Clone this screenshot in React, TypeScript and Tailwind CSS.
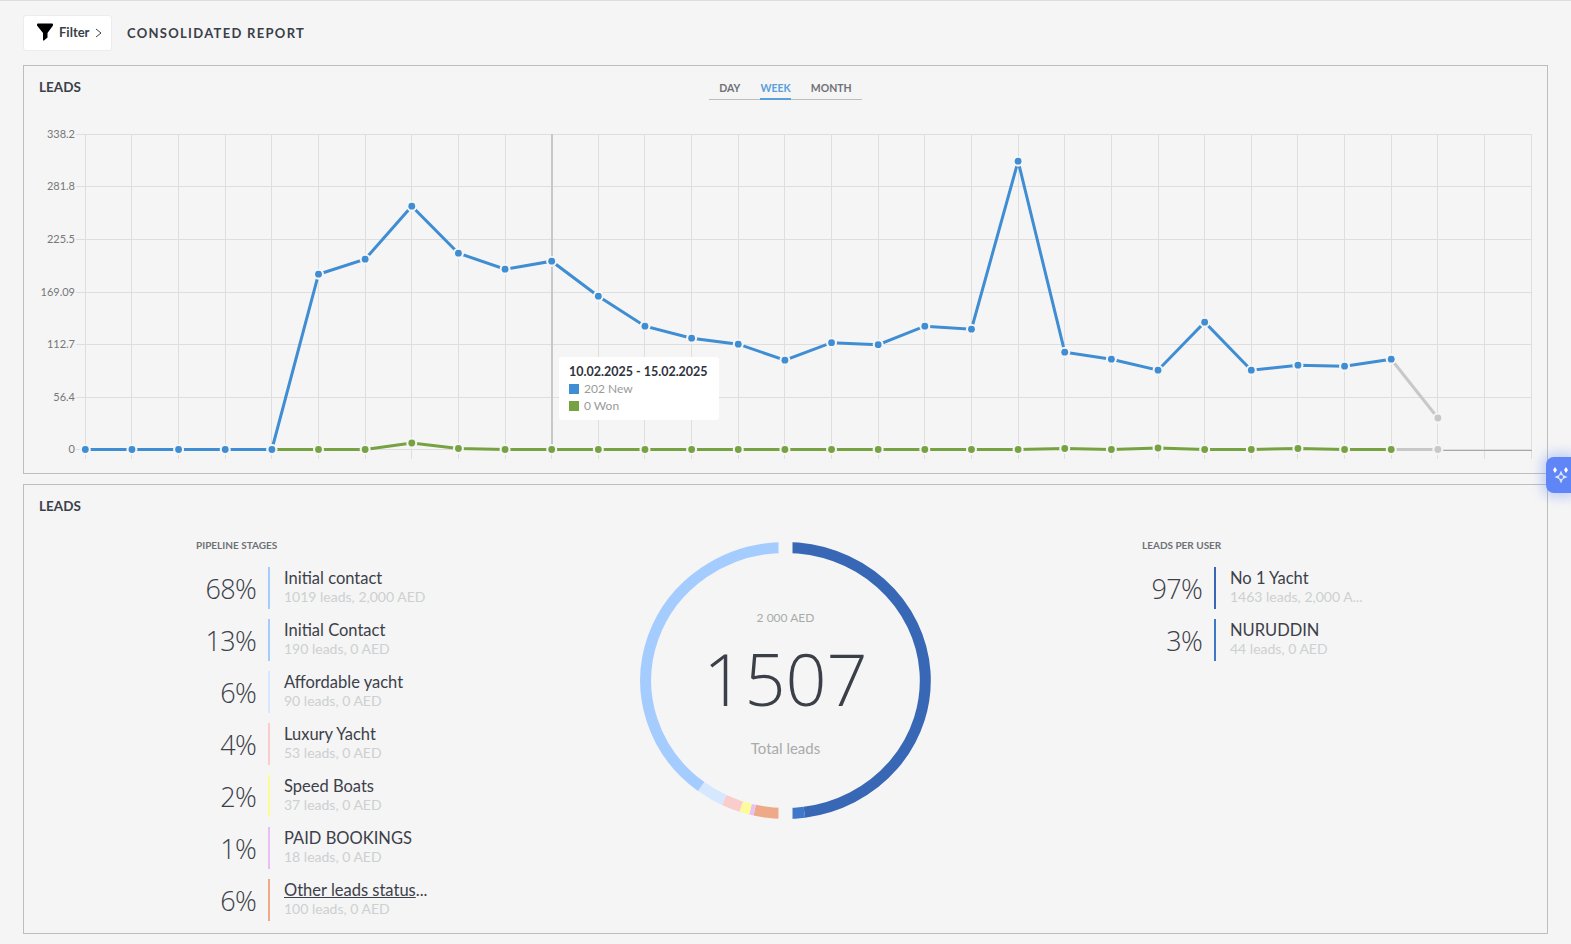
import { Fragment } from "react";

const xAt = (i: number) => 85.3 + 46.64 * i;
const gridX = (i: number) => Math.floor(xAt(i)) + 0.5;
const gridYs = [134.5, 186.5, 239.5, 292.5, 344.5, 397.5, 449.5];
const yLabels = ["338.2", "281.8", "225.5", "169.09", "112.7", "56.4", "0"];

const blueYs = [
  449.5, 449.5, 449.5, 449.5, 449.5, 274.2, 259.2, 206.2, 253.2, 269.2, 261.2,
  296.2, 326.2, 338.2, 344.2, 360.2, 342.7, 344.7, 326.2, 329.2, 161.2, 352.2, 359.2,
  370.2, 322.2, 370.2, 365.2, 366.2, 359.2,
];
// green series starts where the blue one leaves the axis
const greenYs = [
  449.5, 449.5, 449.5, 443, 448.5, 449.5, 449.5, 449.5, 449.5, 449.5, 449.5,
  449.5, 449.5, 449.5, 449.5, 449.5, 449.5, 448.5, 449.5, 448, 449.5, 449.5,
  448.5, 449.5, 449.5,
];
const greenStart = 4;
const lastIdx = 28;
const greyBlueY = 418;

const stages = [
  { pct: "68%", name: "Initial contact", sub: "1019 leads, 2,000 AED", color: "bg-[#a4ccff]" },
  { pct: "13%", name: "Initial Contact", sub: "190 leads, 0 AED", color: "bg-[#a4ccff]" },
  { pct: "6%", name: "Affordable yacht", sub: "90 leads, 0 AED", color: "bg-[#d6e8ff]" },
  { pct: "4%", name: "Luxury Yacht", sub: "53 leads, 0 AED", color: "bg-[#fbcccc]" },
  { pct: "2%", name: "Speed Boats", sub: "37 leads, 0 AED", color: "bg-[#fbfb99]" },
  { pct: "1%", name: "PAID BOOKINGS", sub: "18 leads, 0 AED", color: "bg-[#e8c0f5]" },
  { pct: "6%", name: "Other leads status...", sub: "100 leads, 0 AED", color: "bg-[#eeaa88]", link: true },
];

const users = [
  { pct: "97%", name: "No 1 Yacht", sub: "1463 leads, 2,000 A...", color: "bg-[#3867b5]" },
  { pct: "3%", name: "NURUDDIN", sub: "44 leads, 0 AED", color: "bg-[#3f78c9]" },
];

// angles clockwise from the top of the ring
const ringParts = [
  { from: 0, to: 172.25, color: "#3867b5" },
  { from: 172.25, to: 180, color: "#3f78c9" },
  { from: 180, to: 192.7, color: "#eeaa88" },
  { from: 192.7, to: 194.5, color: "#e8c0f5" },
  { from: 194.5, to: 198.5, color: "#fbfb99" },
  { from: 198.5, to: 206, color: "#fbcccc" },
  { from: 206, to: 217.1, color: "#d6e8ff" },
  { from: 217.1, to: 360, color: "#a4ccff" },
];

const arcPath = (from: number, to: number) => {
  const rx = 139.8;
  const ry = 133;
  const pt = (a: number) => {
    const r = (a * Math.PI) / 180;
    return `${145.5 + rx * Math.sin(r)} ${138.5 - ry * Math.cos(r)}`;
  };
  return `M${pt(from)} A${rx} ${ry} 0 ${to - from > 180 ? 1 : 0} 1 ${pt(to - 0.001)}`;
};

const StatRow = ({ row }: { row: { pct: string; name: string; sub: string; color: string; link?: boolean } }) => (
  <div className="flex h-[42px] items-stretch">
    <div className="flex w-[60px] items-center justify-end pt-[2px] font-['Open_Sans',sans-serif] text-[27px] font-light tracking-[-0.7px] text-[#3c4049]">
      {row.pct}
    </div>
    <div className={`ml-3 w-[2px] ${row.color}`} />
    <div className="ml-[14px] flex w-[150px] flex-col">
      <div className="h-[22px] text-[16.5px] leading-[22px] text-[#3c4049]">
        {row.link ? (
          <>
            <span className="underline">Other leads status</span>...
          </>
        ) : (
          row.name
        )}
      </div>
      <div className="text-[14px] leading-[16px] text-[#cdd0d0]">{row.sub}</div>
    </div>
  </div>
);

const Chart = () => (
  <svg viewBox="24 120 1523 353" width={1523} height={353} className="block">
    {gridYs.map((y) => (
      <line key={y} x1={76} x2={1532} y1={y} y2={y} stroke="#dedede" strokeWidth={1} />
    ))}
    {Array.from({ length: 32 }, (_, i) => (
      <line key={i} x1={gridX(i)} x2={gridX(i)} y1={134} y2={459} stroke="#dedede" strokeWidth={1} />
    ))}
    <line x1={xAt(29)} x2={1532} y1={450.5} y2={450.5} stroke="#a8a8a8" strokeWidth={1} />
    <line x1={552} x2={552} y1={134} y2={449} stroke="#c8c8c8" strokeWidth={2} />
    {gridYs.map((y, i) => (
      <text key={y} x={75} y={y + 3} textAnchor="end" fontSize={11} fill="#777">
        {yLabels[i]}
      </text>
    ))}

    {/* green series */}
    <polyline
      points={greenYs.map((y, i) => `${xAt(i + greenStart)},${y}`).join(" ")}
      fill="none"
      stroke="#76a241"
      strokeWidth={3}
    />
    {/* grey forecast part */}
    <line x1={xAt(lastIdx)} y1={449.5} x2={xAt(29)} y2={449.5} stroke="#c8c8c8" strokeWidth={3} />
    <line x1={xAt(lastIdx)} y1={blueYs[lastIdx]} x2={xAt(29)} y2={greyBlueY} stroke="#c8c8c8" strokeWidth={3} />
    <polyline
      points={blueYs.map((y, i) => `${xAt(i)},${y}`).join(" ")}
      fill="none"
      stroke="#3f8dd2"
      strokeWidth={3}
    />

    {greenYs.map((y, i) => (
      <Fragment key={i}>
        <circle cx={xAt(i + greenStart)} cy={y} r={5.5} fill="#f5f5f5" />
        <circle cx={xAt(i + greenStart)} cy={y} r={3.4} fill="#76a241" />
      </Fragment>
    ))}
    {blueYs.map((y, i) => (
      <Fragment key={i}>
        <circle cx={xAt(i)} cy={y} r={5.5} fill="#f5f5f5" />
        <circle cx={xAt(i)} cy={y} r={3.4} fill="#3f8dd2" />
      </Fragment>
    ))}
    {[449.5, greyBlueY].map((y) => (
      <Fragment key={y}>
        <circle cx={xAt(29)} cy={y} r={5.5} fill="#f5f5f5" />
        <circle cx={xAt(29)} cy={y} r={3.4} fill="#c8c8c8" />
      </Fragment>
    ))}
  </svg>
);

const Donut = () => (
  <div className="relative mt-[9px] h-[277px] w-[291px]">
    <svg viewBox="0 0 291 277" width={291} height={277} className="block">
      {ringParts.map((p) => (
        <path key={p.from} d={arcPath(p.from, p.to)} fill="none" stroke={p.color} strokeWidth={11} />
      ))}
      <rect x={138.5} y={0} width={14} height={14} fill="#f5f5f5" />
      <rect x={138.5} y={263} width={14} height={14} fill="#f5f5f5" />
    </svg>
    <div className="absolute inset-0 flex flex-col items-center">
      <div className="mt-[67px] h-[18px] text-[12px] leading-[18px] text-[#a9abab]">2 000 AED</div>
      <div className="mt-[2px] h-[98px] font-['Open_Sans',sans-serif] text-[72px] leading-[98px] font-light text-[#3a3f48]">
        1507
      </div>
      <div className="mt-[11px] text-[15px] leading-[20px] text-[#a9abab]">Total leads</div>
    </div>
  </div>
);

export default function App() {
  return (
    <div className="relative h-[944px] w-[1571px] overflow-hidden border-t border-[#dedede] bg-[#f5f5f5] font-['Lato',sans-serif]">
      <div className="flex h-[64px] items-center pl-[23px]">
        <button className="flex h-[36px] w-[89px] items-center rounded-[3px] border border-[#ececec] bg-white pl-3 text-[13px] font-bold text-[#3a3f48]">
          <svg width={18} height={18} viewBox="0 0 18 18" className="mr-[5px] mb-[3px]">
            <path d="M1 1.5 Q1 .5 2 .5 H16 Q17 .5 17 1.5 V2.5 L11.5 10 V14.5 L8 17.5 H7 V10 L1 2.5 Z" fill="#000" />
          </svg>
          Filter
          <svg width={7} height={10} viewBox="0 0 7 10" className="ml-[6px]">
            <path d="M1 1 L6 5 L1 9" fill="none" stroke="#444" strokeWidth={1} />
          </svg>
        </button>
        <h1 className="mt-[1px] ml-[15px] text-[13px] font-bold tracking-[1.3px] text-[#3a3f48]">CONSOLIDATED REPORT</h1>
      </div>

      <div className="ml-[23px] h-[409px] w-[1525px] border border-[#bdbdbd]">
        <div className="grid h-[54px] grid-cols-[1fr_auto_1fr] items-start">
          <div className="pt-[12px] pl-[15px] text-[13.5px] leading-[18px] font-bold text-[#3a3f48]">LEADS</div>
          <div className="mt-[13px] flex h-[21px] gap-5 border-b border-[#bdbdbd] px-[10px] text-[10.5px] leading-[19px] font-bold text-[#6f7175]">
            <span>DAY</span>
            <span className="h-[21px] border-b-2 border-[#5aa0dc] text-[#5aa0dc]">WEEK</span>
            <span>MONTH</span>
          </div>
          <div />
        </div>
        <Chart />
      </div>

      <div className="mt-[10px] ml-[23px] h-[450px] w-[1525px] border border-[#bdbdbd]">
        <div className="pt-[12px] pl-[15px] text-[13.5px] leading-[18px] font-bold text-[#3a3f48]">LEADS</div>
        <div className="mt-[18px] flex">
          <div className="ml-[172px] w-[444px]">
            <div className="text-[10px] leading-[24px] font-bold text-[#6f7175]">PIPELINE STAGES</div>
            <div className="mt-[10px] flex flex-col gap-[10px]">
              {stages.map((s) => (
                <StatRow key={s.pct + s.name} row={s} />
              ))}
            </div>
          </div>
          <Donut />
          <div className="ml-[211px]">
            <div className="text-[10px] leading-[24px] font-bold text-[#6f7175]">LEADS PER USER</div>
            <div className="mt-[10px] flex flex-col gap-[10px]">
              {users.map((u) => (
                <StatRow key={u.name} row={u} />
              ))}
            </div>
          </div>
        </div>
      </div>

      {/* tooltip over the chart */}
      <div className="absolute top-[356px] left-[559px] h-[63px] w-[160px] rounded-[3px] bg-white pt-[6px] pl-[10px] text-[12px] leading-[17px] text-[#9a9a9a]">
        <div className="text-[12.5px] font-bold text-[#2f3340]">10.02.2025 - 15.02.2025</div>
        <div className="flex items-center">
          <span className="mr-[5px] h-[10px] w-[10px] bg-[#3f8dd2]" />
          202 New
        </div>
        <div className="flex items-center">
          <span className="mr-[5px] h-[10px] w-[10px] bg-[#76a241]" />
          0 Won
        </div>
      </div>

      {/* assistant button */}
      <div className="absolute top-[456px] left-[1546px] flex h-[36px] w-[25px] rounded-l-[8px] bg-[#5f85f7] shadow-[0_0_12px_4px_rgba(95,133,247,0.35)]">
        <svg width={25} height={36} viewBox="0 0 25 36">
          <path d="M9 9 L11 12 L9 15 L7 12 Z M20 9 L22 12 L20 15 L18 12 Z" fill="#fff" transform="translate(0 1)" />
          <path d="M15 13.5 L17 18 L21.5 20 L17 22 L15 26.5 L13 22 L8.5 20 L13 18 Z" fill="#dfe7ff" />
          <circle cx={15} cy={20} r={2} fill="#5f85f7" />
        </svg>
      </div>
    </div>
  );
}
